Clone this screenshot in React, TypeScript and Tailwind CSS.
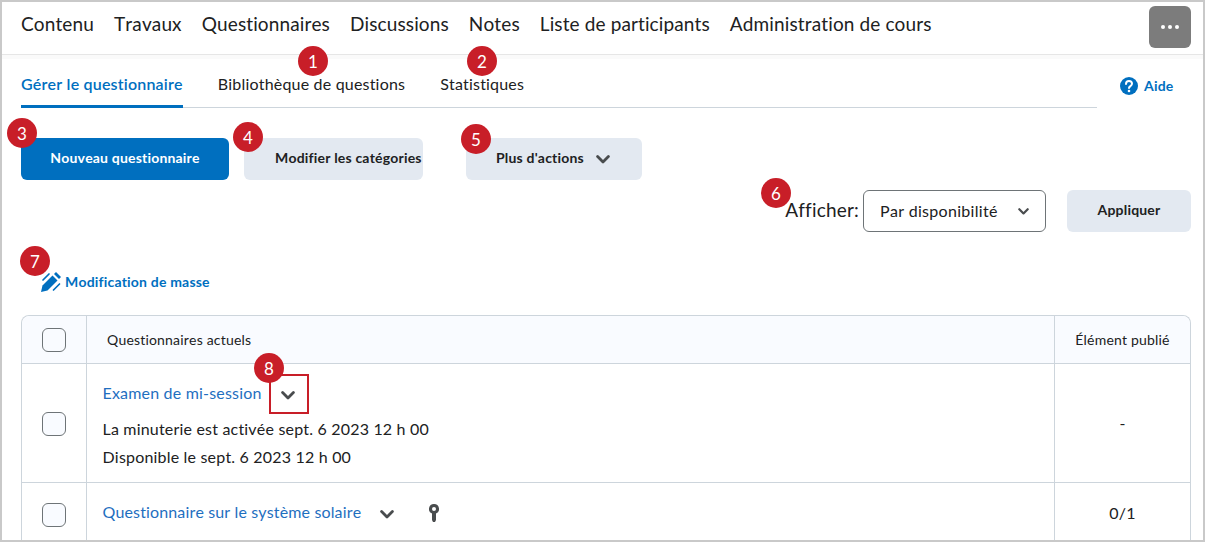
import React from "react";

function Badge({ n, className }: { n: number; className: string }) {
  return (
    <span className={`absolute flex h-[30px] w-[30px] items-center justify-center rounded-full bg-[#c81e28] text-[17px] leading-none tracking-normal text-white ${className}`}>
      {n}
    </span>
  );
}

function Chevron({ className = "" }: { className?: string }) {
  return (
    <svg viewBox="0 0 14 9" className={className} fill="none" stroke="#494c4e" strokeWidth="2.8" strokeLinecap="round" strokeLinejoin="round">
      <path d="M1.6 1.6 7 7l5.4-5.4" />
    </svg>
  );
}

function Checkbox() {
  return <span className="block h-6 w-6 rounded-[6px] border border-[#6e7477] bg-[#f9fbff]" />;
}

const navItems = ["Contenu", "Travaux", "Questionnaires", "Discussions", "Notes", "Liste de participants", "Administration de cours"];

export default function App() {
  return (
    <div className="relative box-border h-[542px] w-[1205px] overflow-hidden border-2 border-[#c9c9c9] bg-white font-['Lato','Noto_Sans',sans-serif] tracking-[0.19px] text-[#202122] [font-kerning:none] [font-variant-ligatures:none]">
      <header className="flex h-[53px] items-start justify-between border-b border-[#e6e6e6] pl-[19px] pr-[12px] pt-[4px]">
        <nav className="flex gap-[20px] pt-[8px] text-[19px] leading-none tracking-[0.12px] text-[#202122]">
          {navItems.map((t) => (
            <span key={t}>{t}</span>
          ))}
        </nav>
        <button className="flex h-[42px] w-[42px] items-center justify-center gap-[3px] rounded-[6px] bg-[#7c7c7c]">
          <span className="h-1 w-1 rounded-full bg-white" />
          <span className="h-1 w-1 rounded-full bg-white" />
          <span className="h-1 w-1 rounded-full bg-white" />
        </button>
      </header>
      <div className="h-1 bg-[#fafafa]" />

      <div className="relative flex h-[49px] pl-[19px]">
        <div className="flex w-[1076px] gap-[35px] border-b border-[#cdd5dc] text-[16px]">
          <span className="relative pt-[13px] font-semibold text-[#006fbf]">
            Gérer le questionnaire
            <span className="absolute bottom-[-1px] left-0 h-[3px] w-full bg-[#006fbf]" />
          </span>
          <span className="pt-[13px]">Bibliothèque de questions</span>
          <span className="pt-[13px]">Statistiques</span>
        </div>
        <span className="ml-[23px] flex items-start gap-[6px] pt-[18px] text-[14px] font-bold leading-[18px] text-[#006fbf]">
          <svg viewBox="0 0 18 18" className="h-[18px] w-[18px]">
            <circle cx="9" cy="9" r="9" fill="#006fbf" />
            <path d="M6 7c0-1.8 1.3-3 3-3s3 1.1 3 2.8c0 2.2-3 2.3-3 4.2" fill="none" stroke="#fff" strokeWidth="2" strokeLinecap="round" />
            <circle cx="9" cy="14" r="1.3" fill="#fff" />
          </svg>
          Aide
        </span>
      </div>

      <div className="mt-[30px] flex pl-[19px] text-[14px] font-bold">
        <button className="h-[42px] w-[208px] rounded-[6px] bg-[#006fbf] pb-[3px] text-white">Nouveau questionnaire</button>
        <button className="ml-[15px] h-[42px] w-[179px] rounded-[6px] bg-[#e3e9f1] pb-[3px] pl-[31px] text-left">Modifier les catégories</button>
        <button className="ml-[43px] flex h-[42px] w-[176px] items-center gap-[12px] rounded-[6px] bg-[#e3e9f1] pl-[30px]">
          <span className="pb-[3px]">Plus d'actions</span>
          <Chevron className="h-[9px] w-[14px]" />
        </button>
      </div>

      <div className="mt-[10px] flex items-center justify-end pr-[12px]">
        <span className="pb-[2px] text-[19px]">Afficher:</span>
        <div className="ml-[4px] flex h-[42px] w-[183px] items-center justify-between rounded-[6px] border border-[#6e7477] pb-[1px] pl-[16px] pr-[16px] text-[16px] tracking-[0.3px]">
          Par disponibilité
          <Chevron className="mt-[2px] h-[7px] w-[11px]" />
        </div>
        <button className="ml-[21px] h-[42px] w-[124px] rounded-[6px] bg-[#e3e9f1] pb-[3px] text-[14px] font-bold">Appliquer</button>
      </div>

      <div className="mt-[40px] flex h-[20px] items-center pl-[39px] text-[14px] font-bold text-[#006fbf]">
        <svg viewBox="0 0 20 20" className="mr-[4px] h-[20px] w-[20px]" fill="#006fbf">
          <path d="M0 20 1.5 13.5 11.5 3.5 16.5 8.5 6.5 18.5z" />
          <path d="M13 2 15 0 20 5 18 7z" />
          <path d="M2 8 8 2M12.5 18 18.5 12" fill="none" stroke="#006fbf" strokeWidth="1.7" strokeLinecap="round" />
        </svg>
        <span className="pb-[2px]">Modification de masse</span>
      </div>

      <div className="ml-[19px] mt-[23px] w-[1170px] rounded-t-[8px] border-x border-t border-[#cdd5dc]">
        <div className="flex h-[48px] rounded-t-[8px] border-b border-[#cdd5dc] bg-[#f9fbff] text-[14px]">
          <div className="flex w-[65px] shrink-0 items-center justify-center border-r border-[#cdd5dc]">
            <Checkbox />
          </div>
          <div className="flex flex-1 items-center pl-[20px]">Questionnaires actuels</div>
          <div className="flex w-[136px] items-center justify-center border-l border-[#cdd5dc]">Élément publié</div>
        </div>
        <div className="flex h-[119px] border-b border-[#cdd5dc]">
          <div className="flex w-[65px] shrink-0 items-center justify-center border-r border-[#cdd5dc] pt-[2px]">
            <Checkbox />
          </div>
          <div className="flex-1 pl-[15.5px] pt-[19px] text-[16px] leading-[20px]">
            <div className="flex items-center">
              <span className="text-[#1f6fbf]">Examen de mi-session</span>
              <Chevron className="ml-[19px] mt-[4px] h-[9px] w-[14px]" />
            </div>
            <div className="mt-[16px]">La minuterie est activée sept. 6 2023 12 h 00</div>
            <div className="mt-[8px]">Disponible le sept. 6 2023 12 h 00</div>
          </div>
          <div className="flex w-[136px] items-center justify-center border-l border-[#cdd5dc] text-[16px]">-</div>
        </div>
        <div className="flex h-[60px]">
          <div className="flex w-[65px] shrink-0 items-start justify-center border-r border-[#cdd5dc] pt-[20px]">
            <Checkbox />
          </div>
          <div className="flex flex-1 items-start pl-[15.5px] pt-[19px] text-[16px] leading-[20px]">
            <span className="tracking-[0.14px] text-[#1f6fbf]">Questionnaire sur le système solaire</span>
            <Chevron className="ml-[19px] mt-[8px] h-[9px] w-[14px]" />
            <svg viewBox="0 0 10 18" className="ml-[35px] mt-[2px] h-[18px] w-[10px]" fill="#494c4e">
              <path fillRule="evenodd" d="M5 0a5 5 0 0 1 2 9.6V16l-1 2H4l-1-2V9.6A5 5 0 0 1 5 0zm0 3a2 2 0 1 0 0 4 2 2 0 0 0 0-4z" />
            </svg>
          </div>
          <div className="flex w-[136px] items-start justify-center border-l border-[#cdd5dc] pt-[20px] text-[16px] leading-[20px]">0/1</div>
        </div>
      </div>

      <span className="absolute left-[267px] top-[372px] h-[40px] w-[40px] border-2 border-[#c81e28]" />
      <Badge n={1} className="left-[296px] top-[44px]" />
      <Badge n={2} className="left-[465px] top-[44px]" />
      <Badge n={3} className="left-[5px] top-[116px]" />
      <Badge n={4} className="left-[231px] top-[120px]" />
      <Badge n={5} className="left-[459px] top-[122px]" />
      <Badge n={6} className="left-[759px] top-[176px]" />
      <Badge n={7} className="left-[18px] top-[244px]" />
      <Badge n={8} className="left-[252px] top-[351px]" />
    </div>
  );
}
